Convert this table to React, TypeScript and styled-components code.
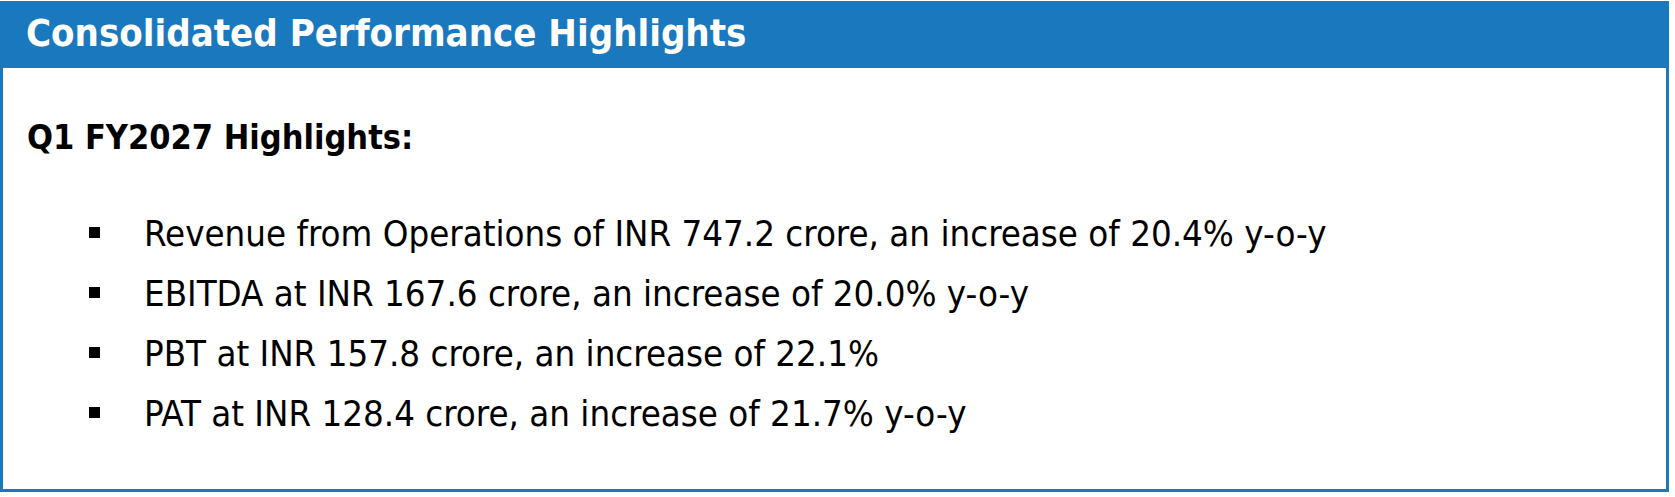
import styled, { createGlobalStyle } from "styled-components"

const Global = createGlobalStyle`
  body {
    margin: 0;
    padding-top: 1px;
    background: #ffffff;
    font-family: "DejaVu Sans Condensed", "DejaVu Sans", sans-serif;
  }
`

const Panel = styled.section`
  box-sizing: border-box;
  width: 1669px;
  height: 491px;
  border: 3px solid #1a78be;
  display: flex;
  flex-direction: column;
`

const Header = styled.h1`
  margin: 0;
  background: #1a78be;
  color: #ffffff;
  font-size: 38px;
  font-weight: 700;
  line-height: 58px;
  padding: 0 0 6px 23px;
`

const Body = styled.div`
  padding: 49px 0 0 24px;
`

const Subtitle = styled.h2`
  margin: 0;
  color: #000000;
  font-size: 34px;
  font-weight: 700;
  line-height: 40px;
`

const List = styled.ul`
  list-style: none;
  margin: 47px 0 0 62px;
  padding: 0;
`

const Item = styled.li`
  display: flex;
  align-items: flex-start;
  gap: 44px;
  color: #000000;
  font-size: 36.3px;
  line-height: 60px;
  white-space: nowrap;
`

const Bullet = styled.span`
  flex: none;
  width: 11px;
  height: 11px;
  margin-top: 23px;
  background: #000000;
`

const highlights = [
  "Revenue from Operations of INR 747.2 crore, an increase of 20.4% y-o-y",
  "EBITDA at INR 167.6 crore, an increase of 20.0% y-o-y",
  "PBT at INR 157.8 crore, an increase of 22.1%",
  "PAT at INR 128.4 crore, an increase of 21.7% y-o-y",
]

export default function App() {
  return (
    <>
      <Global />
      <Panel>
        <Header>Consolidated Performance Highlights</Header>
        <Body>
          <Subtitle>Q1 FY2027 Highlights:</Subtitle>
          <List>
            {highlights.map((text) => (
              <Item key={text}>
                <Bullet />
                <span>{text}</span>
              </Item>
            ))}
          </List>
        </Body>
      </Panel>
    </>
  )
}
